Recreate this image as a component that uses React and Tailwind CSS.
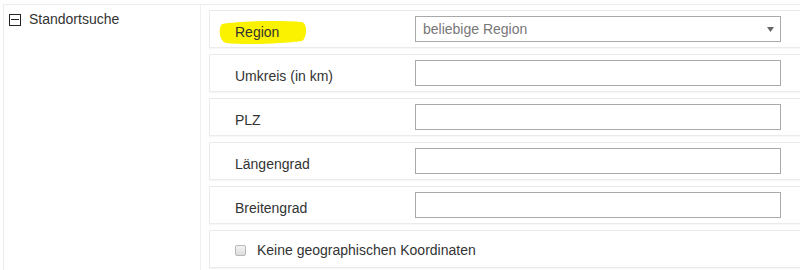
import React from "react";

function Row({ children, className = "" }) {
  return (
    <div
      className={`flex items-center h-[38px] border border-[#ebebeb] border-r-0 bg-white shadow-[0_1px_1px_rgba(0,0,0,0.03)] ${className}`}
    >
      {children}
    </div>
  );
}

function Label({ children }) {
  return (
    <div className="w-[205px] pl-[25px] pt-[6px] text-[14px] text-[#333]">{children}</div>
  );
}

function Input() {
  return (
    <div className="w-[366px] h-[26px] border border-[#a9a9a9] bg-white"></div>
  );
}

export default function App() {
  return (
    <div
      className="w-[800px] h-[270px] bg-white overflow-hidden pt-[4px] pl-[3px]"
      style={{ fontFamily: '"Liberation Sans", Arial, sans-serif' }}
    >
      <div className="flex h-full border-t border-l border-[#ececec]">
        <div className="w-[197px] shrink-0 border-r border-[#f0f0f0] pl-[5px] pt-[4px]">
          <div className="flex items-center gap-[8px]">
            <div className="relative w-[12px] h-[12px] border border-[#222] flex items-center justify-center">
              <div className="w-[8px] h-px bg-[#222]"></div>
            </div>
            <span className="text-[14px] text-[#333]">Standortsuche</span>
          </div>
        </div>
        <div className="flex-1 flex flex-col gap-[6px] pl-[8px] pt-[5px]">
          <Row>
            <div className="relative w-[205px] pl-[25px] pt-[6px] text-[14px] text-[#333]">
              <svg
                className="absolute left-[8px] top-[4px]"
                width="90"
                height="25"
                viewBox="0 0 90 25"
              >
                <path
                  d="M4 4 C 20 1, 60 0, 84 2 C 90 4, 89 18, 84 21 C 60 24, 25 25, 8 23 C 1 21, 0 8, 4 4 Z"
                  fill="#fbf200"
                />
              </svg>
              <span className="relative">Region</span>
            </div>
            <div className="relative flex items-center w-[366px] h-[26px] border border-[#a9a9a9] bg-white pl-[7px] text-[14px] text-[#777]">
              beliebige Region
              <svg
                className="absolute right-[6px] top-[10px]"
                width="7"
                height="5"
                viewBox="0 0 7 5"
              >
                <path d="M0 0 L7 0 L3.5 5 Z" fill="#666" />
              </svg>
            </div>
          </Row>
          <Row>
            <Label>Umkreis (in km)</Label>
            <Input />
          </Row>
          <Row>
            <Label>PLZ</Label>
            <Input />
          </Row>
          <Row>
            <Label>Längengrad</Label>
            <Input />
          </Row>
          <Row>
            <Label>Breitengrad</Label>
            <Input />
          </Row>
          <Row className="h-[37px]">
            <div className="flex items-center pl-[25px] pt-[3px] gap-[11px] text-[14px] text-[#333]">
              <div className="w-[11px] h-[11px] rounded-[2px] border border-[#b8b8b8] bg-gradient-to-b from-[#f4f4f4] to-[#dcdcdc]"></div>
              <span>Keine geographischen Koordinaten</span>
            </div>
          </Row>
        </div>
      </div>
    </div>
  );
}
